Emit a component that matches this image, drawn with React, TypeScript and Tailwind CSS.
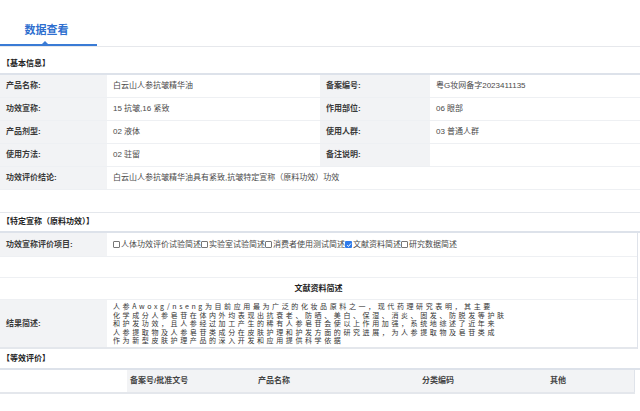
import React from 'react';

const FONT = "font-['Liberation_Sans','Noto_Sans_CJK_SC',sans-serif]";

function Label({ children, className = '' }: { children?: React.ReactNode; className?: string }) {
  return (
    <div className={`flex shrink-0 items-center bg-[#f2f3f5] px-[6px] font-bold text-[#3a3a3a] ${className}`}>
      {children}
    </div>
  );
}

function Value({ children, className = '' }: { children?: React.ReactNode; className?: string }) {
  return <div className={`flex items-center px-[6px] text-[#4a4a4a] ${className}`}>{children}</div>;
}

function SectionTitle({ children, className = '' }: { children: React.ReactNode; className?: string }) {
  return (
    <div className={`flex items-end border-b-2 border-[#dde2ea] px-[2px] pb-[3px] text-[8px] font-bold text-[#222] ${className}`}>
      {children}
    </div>
  );
}

function Check({ checked }: { checked?: boolean }) {
  return checked ? (
    <span className="mr-[1px] inline-flex h-[7px] w-[7px] items-center justify-center rounded-[1px] bg-[#2f7bea]">
      <svg viewBox="0 0 8 8" className="h-[6px] w-[6px]">
        <path d="M1.5 4.2 L3.3 6 L6.6 2" fill="none" stroke="#fff" strokeWidth="1.3" />
      </svg>
    </span>
  ) : (
    <span className="mr-[1px] inline-block h-[7px] w-[7px] rounded-[1px] border border-[#777] bg-white" />
  );
}

const basicRows: [string, string, string, string][] = [
  ['产品名称:', '白云山人参抗皱精华油', '备案编号:', '粤G妆网备字2023411135'],
  ['功效宣称:', '15 抗皱,16 紧致', '作用部位:', '06 眼部'],
  ['产品剂型:', '02 液体', '使用人群:', '03 普通人群'],
  ['使用方法:', '02 驻留', '备注说明:', ''],
];

const claims = [
  { text: '人体功效评价试验简述', checked: false },
  { text: '实验室试验简述', checked: false },
  { text: '消费者使用测试简述', checked: false },
  { text: '文献资料简述', checked: true },
  { text: '研究数据简述', checked: false },
];

const summary = [
  '人参Awoxg/nseng为目前应用最为广泛的化妆品原料之一，现代药理研究表明，其主要',
  '化学成分人参皂苷在体内外均表现出抗衰老、防晒、美白、保湿、消炎、固发、防脱发等护肤',
  '和护发功效，且人参经过加工产生的稀有人参皂苷会使以上作用加强，系统地综述了近年来',
  '人参提取物及人参皂苷类成分在皮肤护理和护发方面的研究进展，为人参提取物及皂苷类成',
  '作为新型皮肤护理产品的深入开发和应用提供科学依据',
];

export default function App() {
  return (
    <div className={`h-[411px] w-[640px] overflow-hidden bg-white text-[8px] ${FONT}`}>
      {/* Tabs */}
      <div className="flex h-[47px] border-b border-[#e6e8ec]">
        <div className="relative flex w-[97px] items-start justify-center border-b-2 border-[#3a7bd5] pt-[22px] pr-[4px]">
          <span className="text-[11px] font-bold leading-[16px] text-[#2f6fcf]">数据查看</span>
          <span className="absolute bottom-0 left-[42px] h-0 w-0 border-x-[3px] border-b-[3px] border-x-transparent border-b-[#3a7bd5]" />
        </div>
      </div>

      {/* 基本信息 */}
      <SectionTitle className="h-[28px]">【基本信息】</SectionTitle>
      <div className="flex flex-col">
        {basicRows.map((r) => (
          <div key={r[0]} className="flex h-[23px] border-b border-[#eef0f3]">
            <Label className="w-[107px]">{r[0]}</Label>
            <Value className="w-[213px]">{r[1]}</Value>
            <Label className="w-[110px]">{r[2]}</Label>
            <Value className="flex-1">{r[3]}</Value>
          </div>
        ))}
        <div className="flex h-[23px] border-b border-[#eef0f3]">
          <Label className="w-[107px]">功效评价结论:</Label>
          <Value className="flex-1">白云山人参抗皱精华油具有紧致,抗皱特定宣称（原料功效）功效</Value>
        </div>
        <div className="h-[23px] border-b border-[#e4e7ec]" />
      </div>

      {/* 特定宣称 */}
      <SectionTitle className="h-[20px]">【特定宣称（原料功效）】</SectionTitle>
      <div className="flex w-[638px] flex-col border-r border-[#dfe3ea]">
        <div className="flex h-[24px] border-b border-[#eef0f3]">
          <Label className="w-[107px]">功效宣称评价项目:</Label>
          <Value className="flex-1 px-[4px]">
            {claims.map((c) => (
              <span key={c.text} className="inline-flex items-center">
                <Check checked={c.checked} />
                {c.text}
              </span>
            ))}
          </Value>
        </div>
        <div className="h-[21px] border-b border-[#eef0f3]" />
        <div className="flex h-[22px] items-center justify-center border-b border-[#eef0f3] font-bold text-[#222]">
          文献资料简述
        </div>
        <div className="flex h-[49px] border-b-2 border-[#e4e7ec]">
          <Label className="w-[107px]">结果简述:</Label>
          <div className="flex flex-1 flex-col justify-center px-[6px] font-['Noto_Sans_CJK_SC',sans-serif] text-[7px] leading-[8.5px] tracking-[2.6px] text-[#333]">
            {summary.map((line) => (
              <div key={line} className="h-[8.5px] whitespace-nowrap">{line}</div>
            ))}
          </div>
        </div>
      </div>

      {/* 等效评价 */}
      <SectionTitle className="h-[21px]">【等效评价】</SectionTitle>
      <div className="flex h-[24px] w-[635px] border-b-2 border-[#e4e7ec]">
        <div className="w-[127px]" />
        <div className="flex flex-1 border-r border-[#dfe3ea] bg-[#f2f3f5] font-bold text-[#444]">
          <div className="flex w-[128px] items-center px-[3px]">备案号/批准文号</div>
          <div className="flex w-[162px] items-center px-[3px]">产品名称</div>
          <div className="flex w-[129px] items-center px-[5px]">分类编码</div>
          <div className="flex flex-1 items-center px-[4px]">其他</div>
        </div>
      </div>
    </div>
  );
}
